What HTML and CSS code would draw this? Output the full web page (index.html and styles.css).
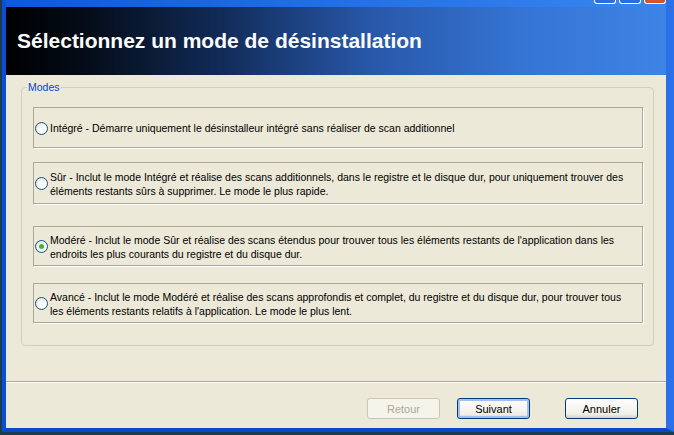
FILE: index.html
```html
<!DOCTYPE html>
<html lang="fr">
<head>
  <meta charset="UTF-8">
  <title>Désinstallation</title>
  <link rel="stylesheet" href="styles.css">
</head>
<body>
  <div class="window">
    <div class="titlebar">
      <span class="tb-btn"></span>
      <span class="tb-btn"></span>
      <span class="tb-btn close"></span>
    </div>
    <div class="banner">
      <h1>Sélectionnez un mode de désinstallation</h1>
    </div>
    <div class="content">
      <fieldset class="modes">
        <legend>Modes</legend>
        <label class="mode m1">
          <span class="radio"></span>
          <span class="desc">Intégré - Démarre uniquement le désinstalleur intégré sans réaliser de scan additionnel</span>
        </label>
        <label class="mode m2">
          <span class="radio"></span>
          <span class="desc">Sûr - Inclut le mode Intégré et réalise des scans additionnels, dans le registre et le disque dur, pour uniquement trouver des<br>éléments restants sûrs à supprimer. Le mode le plus rapide.</span>
        </label>
        <label class="mode m3">
          <span class="radio checked"></span>
          <span class="desc">Modéré - Inclut le mode Sûr et réalise des scans étendus pour trouver tous les éléments restants de l'application dans les<br>endroits les plus courants du registre et du disque dur.</span>
        </label>
        <label class="mode m4">
          <span class="radio"></span>
          <span class="desc">Avancé - Inclut le mode Modéré et réalise des scans approfondis et complet, du registre et du disque dur, pour trouver tous<br>les éléments restants relatifs à l'application. Le mode le plus lent.</span>
        </label>
      </fieldset>
    </div>
    <div class="footer">
      <button class="btn" disabled>Retour</button>
      <button class="btn default">Suivant</button>
      <button class="btn cancel">Annuler</button>
    </div>
  </div>
</body>
</html>
```

FILE: styles.css
```css
body, html {
  margin: 0;
  padding: 0;
  height: 100%;
  background: #1d3b4e;
  font-family: "Liberation Sans", Arial, sans-serif;
  font-size: 10.5px;
  overflow: hidden;
}

body {
  padding-left: 2px;
}

.window {
  width: 660px;
  height: 428px;
  display: flex;
  flex-direction: column;
  background: #ece9d8;
  border-left: 4px solid #0b4fd6;
  border-right: 8px solid #2a70e8;
  border-bottom: 4px solid #0a48c8;
}

.titlebar {
  height: 7px;
  display: flex;
  justify-content: flex-end;
  align-items: flex-start;
  gap: 3px;
  padding-right: 0;
  background: linear-gradient(90deg, #0a5bd9, #2c78ea 70%, #3a86f0);
}

.tb-btn {
  width: 20px;
  height: 3px;
  background: #2d6de2;
  border: 1px solid #fff;
  border-top: none;
  border-radius: 0 0 3px 3px;
}

.tb-btn.close {
  background: #d9512a;
}

.banner {
  height: 68px;
  display: flex;
  align-items: center;
  padding-left: 11px;
  background: linear-gradient(90deg, #000 0%, #040c18 12%, #112a55 32%, #2857a8 55%, #3574d3 78%, #3e83e6 100%);
}

.banner h1 {
  margin: 0;
  color: #fff;
  font-size: 21px;
  font-weight: bold;
}

.content {
  flex: 1;
  padding: 6px 12px 0 15px;
  border-bottom: 1px solid #aca899;
  box-shadow: 0 1px 0 #fff;
}

.modes {
  margin: 0;
  height: 263px;
  padding: 0 9px 0 5px;
  border: 1px solid #d0d0bf;
  border-radius: 4px;
}

.modes legend {
  padding: 0 1px;
  color: #0046d5;
  line-height: 13px;
}

.mode {
  display: flex;
  align-items: center;
  gap: 2px;
  margin-left: 6px;
  padding: 0 0 0 1px;
  border: 1px solid #aca899;
  border-right-color: #fff;
  border-bottom-color: #fff;
  box-shadow: inset -1px -1px 0 #aca899;
  color: #000;
  line-height: 14px;
}

.m1 { margin-top: 13px; height: 40px; }
.m2 { margin-top: 13px; height: 41px; }
.m3 { margin-top: 21px; height: 39px; }
.m4 { margin-top: 16px; height: 39px; }

.radio {
  flex: none;
  width: 11px;
  height: 11px;
  border: 1px solid #1c5180;
  border-radius: 50%;
  background: radial-gradient(circle at 60% 60%, #fff 30%, #dcdcd6 90%);
  display: flex;
  align-items: center;
  justify-content: center;
}

.radio.checked::after {
  content: "";
  width: 5px;
  height: 5px;
  border-radius: 50%;
  background: #3eb43e;
}

.footer {
  height: 46px;
  display: flex;
  justify-content: flex-end;
  align-items: flex-start;
  gap: 17px;
  padding: 16px 28px 0 0;
  box-sizing: border-box;
}

.btn {
  width: 73px;
  height: 21px;
  padding: 0;
  font-family: inherit;
  font-size: 11px;
  color: #000;
  background: linear-gradient(#fff, #f1efe6 80%, #d6d0c5);
  border: 1px solid #003c74;
  border-radius: 3px;
}

.btn:disabled {
  color: #aca899;
  border-color: #c9c7ba;
  background: #f5f4ea;
}

.btn.default {
  box-shadow: inset 0 0 0 2px #a4c0ec;
}

.btn.cancel {
  margin-left: 18px;
}
```
